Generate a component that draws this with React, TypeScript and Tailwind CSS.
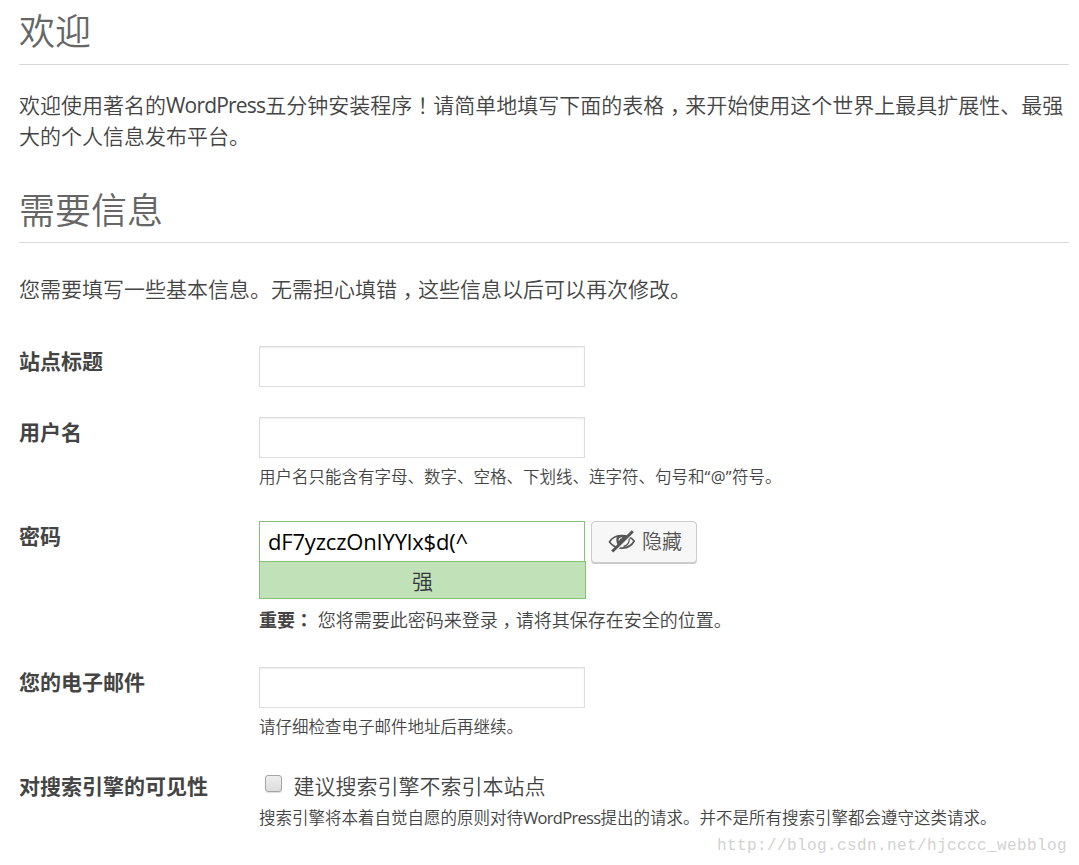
import type { ReactNode } from "react";

/* Centred full-width punctuation */
function Mark({ children }: { children: ReactNode }) {
  return <span lang="zh-TW" className="font-['Noto_Sans_CJK_TC',sans-serif]">{children}</span>;
}

/* Full-width comma, centred horizontally on the baseline */
function Comma() {
  return <span className="inline-block w-[1em] pl-[0.27em] [font-feature-settings:'halt']">，</span>;
}

function Row({ label, height, children }: { label: string; height: string; children: ReactNode }) {
  return (
    <div className={`flex ${height}`}>
      <div className="-mt-px w-60 shrink-0 text-[21px] leading-8 font-bold">{label}</div>
      <div className="min-w-0 flex-1">{children}</div>
    </div>
  );
}

function TextField({ label }: { label: string }) {
  return (
    <input
      type="text"
      aria-label={label}
      className="block h-[41px] w-[326px] border border-[#ddd] bg-white px-2 shadow-[inset_0_1px_2px_rgba(0,0,0,0.07)] outline-none"
    />
  );
}

function HiddenIcon() {
  return (
    <svg width="28" height="24" viewBox="0 0 28 24" fill="none" stroke="#555" aria-hidden="true">
      <path d="M1.5 12C6 4.2 19.5 3 26.2 11C21.5 19.8 8 20.8 1.5 12Z" strokeWidth="1.6" />
      <path d="M8.8 6.5C7.6 11 9 15.5 12 17L20 7.5C17 5 12 4.8 8.8 6.5Z" fill="#555" stroke="none" />
      <path d="M11 10.5C11 8.6 12.3 7.7 14 7.8" stroke="#f7f7f7" strokeWidth="1.1" />
      <path d="M21 8C22 12 19.8 15.5 15.5 16.5" strokeWidth="1.3" />
      <path d="M6 22.5L26 2.5" stroke="#f7f7f7" strokeWidth="1.3" />
      <path d="M4.2 21.5L24.8 1.2" strokeWidth="3" />
    </svg>
  );
}

export default function App() {
  return (
    <main className="relative h-[865px] w-[1079px] overflow-hidden bg-white pr-[10px] pl-[19px] font-['Open_Sans','Noto_Sans_CJK_SC',sans-serif] text-[#444]" lang="zh-CN">
      <h1 className="h-[65px] border-b border-[#dadada] text-[36px] leading-[64px] font-[350] text-[#666]">欢迎</h1>
      <p className="mt-[24px] w-[1060px] text-[21px] leading-[31px] font-[350]">
        欢迎使用著名的<span className="font-normal tracking-[-0.8px]">WordPress</span>五分钟安装程序<Mark>！</Mark>请简单地填写下面的表格<Comma />来开始使用这个世界上最具扩展性、最强<br />
        大的个人信息发布平台。
      </p>
      <h2 className="mt-[27px] h-[64px] border-b border-[#dadada] text-[36px] leading-[64px] font-[350] text-[#666]">需要信息</h2>
      <p className="mt-[30px] text-[21px] leading-8 font-[350]">
        您需要填写一些基本信息。无需担心填错<Comma />这些信息以后可以再次修改。
      </p>
      <form className="mt-[41px] font-[350]">
        <Row label="站点标题" height="h-[71px]">
          <TextField label="站点标题" />
        </Row>
        <Row label="用户名" height="h-[104px]">
          <TextField label="用户名" />
          <p className="mt-[6px] text-[16.5px] leading-[25px]">用户名只能含有字母、数字、空格、下划线、连字符、句号和<span className="font-normal tracking-[0.4px]">“@”</span>符号。</p>
        </Row>
        <Row label="密码" height="h-[146px]">
          <div className="flex h-[40px] items-start gap-[6px]">
            <input
              type="text"
              aria-label="密码"
              defaultValue="dF7yzczOnIYYlx$d(^"
              className="block h-[41px] w-[326px] border border-[#83c373] bg-white px-[8px] pb-px text-[22px] font-normal tracking-[-0.18px] text-black outline-none"
            />
            <button type="button" className="flex h-[42px] w-[106px] items-center gap-[6px] rounded-[4px] border border-[#ccc] bg-[#f7f7f7] pl-[16px] text-[20px] text-[#555] shadow-[0_1px_0_#ccc]">
              <HiddenIcon />
              <span>隐藏</span>
            </button>
          </div>
          <div className="h-[38px] w-[327px] border border-[#83c373] bg-[#c1e1b9] text-center text-[21px] leading-[38px] text-[#32373c]">强</div>
          <p className="mt-[7px] text-[18px] leading-[27px]">
            <strong className="font-bold">重要<Mark>：</Mark></strong> 您将需要此密码来登录<Comma />请将其保存在安全的位置。
          </p>
        </Row>
        <Row label="您的电子邮件" height="h-[104px]">
          <TextField label="您的电子邮件" />
          <p className="mt-[6px] text-[16.5px] leading-[25px]">请仔细检查电子邮件地址后再继续。</p>
        </Row>
        <Row label="对搜索引擎的可见性" height="h-[80px]">
          <label className="-mt-px flex h-8 items-start text-[21px] leading-8">
            <input
              type="checkbox"
              className="mt-[5px] mr-[11.5px] ml-[6px] size-[17px] appearance-none rounded-[3px] border border-[#a5a5a5] bg-linear-to-b from-[#eee] to-[#ddd] shadow-[0_1px_1px_#ddd]"
            />
            建议搜索引擎不索引本站点
          </label>
          <p className="mt-[3px] text-[16.5px] leading-[25px] whitespace-nowrap">搜索引擎将本着自觉自愿的原则对待<span className="font-normal tracking-[-0.7px]">WordPress</span>提出的请求。并不是所有搜索引擎都会遵守这类请求。</p>
        </Row>
      </form>
      <div className="absolute top-[834px] left-[717px] font-['Liberation_Mono',monospace] text-[16px] leading-6 tracking-[0.4px] text-[#d2d2d0]">http://blog.csdn.net/hjcccc_webblog</div>
    </main>
  );
}
